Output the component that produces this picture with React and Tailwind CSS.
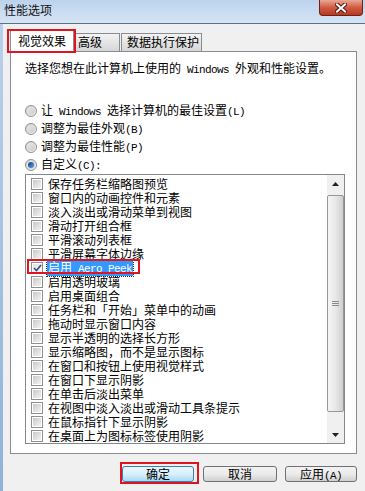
import React from "react";

const items = [
  "保存任务栏缩略图预览",
  "窗口内的动画控件和元素",
  "淡入淡出或滑动菜单到视图",
  "滑动打开组合框",
  "平滑滚动列表框",
  "平滑屏幕字体边缘",
  "启用 Aero Peek",
  "启用透明玻璃",
  "启用桌面组合",
  "任务栏和「开始」菜单中的动画",
  "拖动时显示窗口内容",
  "显示半透明的选择长方形",
  "显示缩略图，而不是显示图标",
  "在窗口和按钮上使用视觉样式",
  "在窗口下显示阴影",
  "在单击后淡出菜单",
  "在视图中淡入淡出或滑动工具条提示",
  "在鼠标指针下显示阴影",
  "在桌面上为图标标签使用阴影",
];

// latin runs are half width in the original font
function Mix({ text }) {
  const parts = text.split(/([\x20-\x7e]+)/).filter(Boolean);
  return parts.map((p, i) =>
    /^[\x20-\x7e]+$/.test(p) ? (
      <span key={i} className="font-['Liberation_Mono',monospace] text-[11px] tracking-[-0.6px] whitespace-pre">
        {p}
      </span>
    ) : (
      <span key={i}>{p}</span>
    )
  );
}

function Radio({ checked }) {
  return (
    <span className="w-[12px] h-[12px] rounded-full border border-[#8e8f8f] bg-gradient-to-br from-[#cfcfcf] to-[#fafafa] flex items-center justify-center shrink-0">
      <span className="w-[8px] h-[8px] rounded-full bg-gradient-to-br from-[#e6e6e6] to-[#cdcdcd] flex items-center justify-center">
        {checked && <span className="w-[6px] h-[6px] rounded-full bg-gradient-to-br from-[#0b3f80] to-[#54a7ec]" />}
      </span>
    </span>
  );
}

function Check({ checked }) {
  return (
    <span className="w-[12px] h-[12px] border border-[#8e8f8f] bg-white p-[1px] shrink-0 flex">
      <span
        className={
          checked
            ? "flex-1 bg-gradient-to-br from-[#e2e2e2] to-[#fbfbfb] flex items-center justify-center"
            : "flex-1 bg-gradient-to-br from-[#c9c9c9] to-[#f3f3f3]"
        }
      >
        {checked && (
          <svg width="9" height="8" viewBox="0 0 9 8">
            <path d="M1 4 L3.5 6.5 L8 1" fill="none" stroke="#2d4a8a" strokeWidth="1.6" />
          </svg>
        )}
      </span>
    </span>
  );
}

function Arrow({ up }) {
  return (
    <svg width="7" height="4" viewBox="0 0 7 4">
      <path d={up ? "M0 4 L3.5 0 L7 4 Z" : "M0 0 L3.5 4 L7 0 Z"} fill="#222" />
    </svg>
  );
}

export default function App() {
  return (
    <div className="relative w-[365px] h-[491px] overflow-hidden bg-[#f0f0f0] font-['Noto_Sans_CJK_SC',sans-serif] text-[12px] leading-[14px] text-black">
      {/* title bar */}
      <div className="h-[23px] flex items-start bg-gradient-to-b from-[#bcd3ec] via-[#c9dcf1] to-[#d6e4f4]">
        <span className="ml-[4px] mt-[3px] text-[#111]">性能选项</span>
        <div className="ml-auto mr-[2px] w-[44px] h-[16px] rounded-b-[4px] border border-t-0 border-[#6b2116] bg-gradient-to-b from-[#e9a895] via-[#d05a43] to-[#b8381f] flex items-center justify-center">
          <svg width="12" height="10" viewBox="0 0 12 10">
            <path d="M2 1.5 L10 8.5 M10 1.5 L2 8.5" stroke="#4a1c12" strokeWidth="4" strokeLinecap="square" />
            <path d="M2 1.5 L10 8.5 M10 1.5 L2 8.5" stroke="#ffffff" strokeWidth="2" strokeLinecap="square" />
          </svg>
        </div>
      </div>
      <div className="h-[1px] bg-[#5b7089]" />

      <div className="flex h-[467px]">
        <div className="w-[3px] bg-gradient-to-b from-[#b9d0ea] to-[#8fb2da]" />
        <div className="flex-1 pl-[7px] pr-[8px] pt-[6px]">
          {/* tabs */}
          <div className="h-[21px] flex items-end">
            <div className="relative z-10 w-[64px] h-[22px] -mb-[1px] bg-white border border-b-0 border-[#898c95] flex justify-center pt-[3px]">
              视觉效果
            </div>
            <div className="w-[46px] h-[18px] border border-b-0 border-l-0 border-[#898c95] bg-gradient-to-b from-[#f3f3f3] to-[#d6d6d6] pl-[4px] pt-[1px]">
              高级
            </div>
            <div className="ml-[1px] w-[81px] h-[18px] border border-b-0 border-[#898c95] bg-gradient-to-b from-[#f3f3f3] to-[#d6d6d6] pl-[5px] pt-[1px]">
              数据执行保护
            </div>
          </div>

          {/* panel */}
          <div className="h-[403px] border border-[#898c95] bg-white pl-[14px] pr-[11px]">
            <div className="mt-[9px]">
              <Mix text="选择您想在此计算机上使用的 Windows 外观和性能设置。" />
            </div>

            <div className="mt-[25px]">
              {[
                ["让 Windows 选择计算机的最佳设置(L)", false],
                ["调整为最佳外观(B)", false],
                ["调整为最佳性能(P)", false],
                ["自定义(C):", true],
              ].map(([label, on]) => (
                <div key={label} className="h-[18px] flex items-center">
                  <Radio checked={on} />
                  <span className="ml-[4px]">
                    <Mix text={label} />
                  </span>
                </div>
              ))}
            </div>

            {/* list box */}
            <div className="h-[270px] border border-[#828790] bg-white flex">
              <div className="flex-1 pt-[2px]">
                {items.map((it, i) => (
                  <div key={it} className="h-[14px] flex items-center pl-[5px]">
                    <Check checked={i === 6} />
                    {i === 6 ? (
                      <span className="ml-[4px] px-[1px] bg-[#3399ff] text-white outline-1 outline-dotted outline-[#333]">
                        <Mix text={it} />
                      </span>
                    ) : (
                      <span className="ml-[5px]">
                        <Mix text={it} />
                      </span>
                    )}
                  </div>
                ))}
              </div>
              <div className="w-[17px] flex flex-col bg-[#f0f0f0]">
                <div className="h-[17px] flex items-center justify-center">
                  <Arrow up />
                </div>
                <div className="flex-1 pt-[3px]">
                  <div className="h-[217px] rounded-[2px] border border-[#979797] bg-gradient-to-r from-[#f5f5f5] via-[#e8e8e8] to-[#cfcfcf] flex flex-col items-center justify-center gap-[1px]">
                    <span className="w-[7px] h-[1px] bg-[#8a8a8a]" />
                    <span className="w-[7px] h-[1px] bg-[#8a8a8a]" />
                    <span className="w-[7px] h-[1px] bg-[#8a8a8a]" />
                  </div>
                </div>
                <div className="h-[17px] flex items-center justify-center">
                  <Arrow />
                </div>
              </div>
            </div>
          </div>

          {/* buttons */}
          <div className="mt-[12px] flex justify-end">
            <button className="w-[72px] h-[16px] rounded-[3px] border border-[#3c7fb1] bg-gradient-to-b from-[#eaf6fd] via-[#d9f0fc] to-[#a7d9f5] leading-[14px]">
              确定
            </button>
            <button className="ml-[9px] w-[74px] h-[16px] rounded-[3px] border border-[#707070] bg-gradient-to-b from-[#f2f2f2] via-[#ebebeb] to-[#cfcfcf] leading-[14px]">
              取消
            </button>
            <button className="ml-[8px] w-[72px] h-[16px] rounded-[3px] border border-[#707070] bg-gradient-to-b from-[#f2f2f2] via-[#ebebeb] to-[#cfcfcf] leading-[14px]">
              <Mix text="应用(A)" />
            </button>
          </div>
        </div>
      </div>

      {/* red annotation boxes */}
      <div className="absolute left-[7px] top-[29px] w-[69px] h-[24px] border-2 border-[#e0141e] pointer-events-none z-20" />
      <div className="absolute left-[27px] top-[259px] w-[113px] h-[15px] border-2 border-[#e0141e] pointer-events-none z-20" />
      <div className="absolute left-[120px] top-[462px] w-[79px] h-[22px] border-2 border-[#e0141e] pointer-events-none z-20" />
    </div>
  );
}
